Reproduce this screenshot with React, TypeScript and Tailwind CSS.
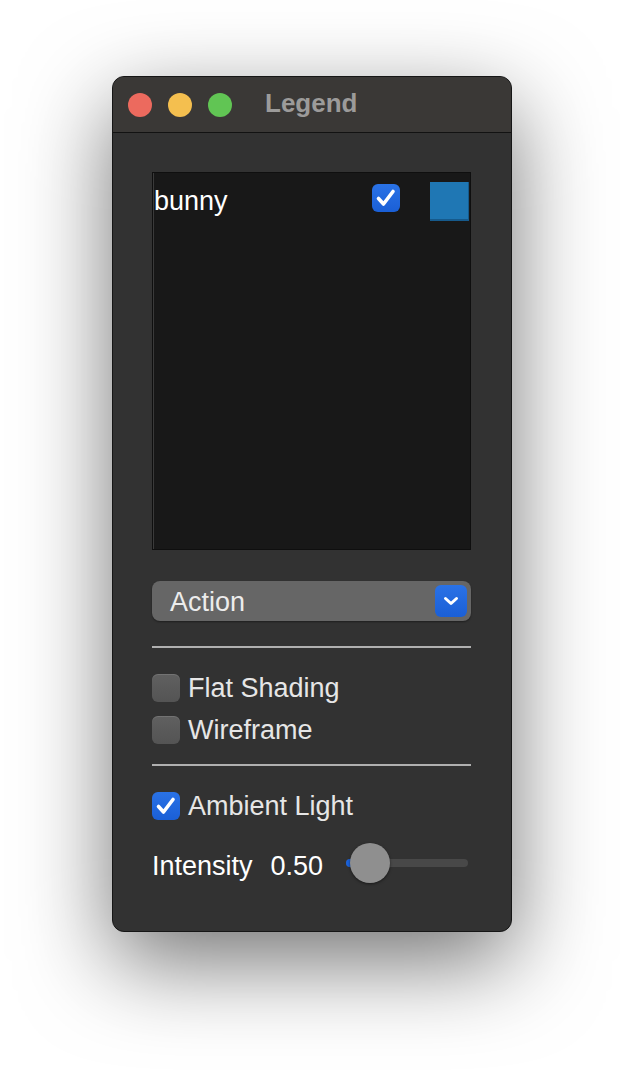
import React from "react";

function Check({ checked }: { checked?: boolean }) {
  if (checked) {
    return (
      <div className="w-[28px] h-[28px] rounded-[6px] bg-gradient-to-b from-[#2a72e6] to-[#1a5fd6] flex items-center justify-center shrink-0">
        <svg width="28" height="28" viewBox="0 0 28 28" fill="none">
          <path
            d="M6.5 14.5 L11.5 20 L21 7.5"
            stroke="white"
            strokeWidth="3.6"
            strokeLinecap="round"
            strokeLinejoin="round"
          />
        </svg>
      </div>
    );
  }
  return (
    <div className="w-[28px] h-[28px] rounded-[6px] bg-gradient-to-b from-[#606060] to-[#545454] shadow-[inset_0_1px_0_rgba(255,255,255,0.12)] shrink-0" />
  );
}

function App() {
  const font = "font-['Liberation_Sans',Arial,sans-serif]";
  const value = 0.5;

  return (
    <div className={"min-h-[1080px] bg-white flex justify-center pt-[76px] " + font}>
      <div className="w-[400px] h-[856px] rounded-[12px] border border-[#161616] bg-[#323232] overflow-hidden shadow-[0_30px_90px_rgba(0,0,0,0.55)] flex flex-col">
        {/* title bar */}
        <div className="h-[56px] bg-[#3a3836] border-b border-[#121212] flex items-center pl-[15px] shrink-0">
          <div className="w-[24px] h-[24px] rounded-full bg-[#ec6a5e]" />
          <div className="w-[24px] h-[24px] rounded-full bg-[#f4bf4f] ml-[16px]" />
          <div className="w-[24px] h-[24px] rounded-full bg-[#61c554] ml-[16px]" />
          <span className="ml-[33px] mb-[3px] text-[26px] font-bold text-[#9c9b9a] leading-none">Legend</span>
        </div>

        <div className="flex flex-col pl-[39px] pr-[40px] pt-[39px]">
          {/* legend list */}
          <div className="h-[378px] bg-[#181818] border border-[#0f0f0f] shadow-[inset_1px_0_0_#3a3a3a]">
            <div className="flex items-start pl-[1px] pr-[1px]">
              <span className="mt-[15px] text-[27px] text-white leading-none">bunny</span>
              <div className="ml-auto mt-[11px]">
                <Check checked />
              </div>
              <div className="ml-[30px] mt-[9px] w-[39px] h-[39px] bg-[#1f77b4] border-b-2 border-r border-[#165a8c]" />
            </div>
          </div>

          {/* dropdown */}
          <div className="mt-[31px] h-[40px] rounded-[8px] bg-[#666666] shadow-[0_1px_2px_rgba(0,0,0,0.4)] flex items-center pl-[18px] pr-[4px]">
            <span className="mt-[2px] text-[27px] text-[#ececec] leading-none">Action</span>
            <div className="ml-auto w-[32px] h-[32px] rounded-[6px] bg-gradient-to-b from-[#2a72e6] to-[#1a5fd6] flex items-center justify-center">
              <svg width="16" height="16" viewBox="0 0 16 16" fill="none">
                <path
                  d="M2.5 5.5 L8 10.5 L13.5 5.5"
                  stroke="white"
                  strokeWidth="3"
                  strokeLinecap="round"
                  strokeLinejoin="round"
                />
              </svg>
            </div>
          </div>

          <div className="mt-[25px] h-[2px] bg-[#b0b0b0]" />

          <div className="mt-[26px] flex items-center h-[28px]">
            <Check />
            <span className="ml-[8px] text-[27px] text-[#e6e6e6] leading-none">Flat Shading</span>
          </div>
          <div className="mt-[14px] flex items-center h-[28px]">
            <Check />
            <span className="ml-[8px] text-[27px] text-[#e6e6e6] leading-none">Wireframe</span>
          </div>

          <div className="mt-[20px] h-[2px] bg-[#b0b0b0]" />

          <div className="mt-[26px] flex items-center h-[28px]">
            <Check checked />
            <span className="ml-[8px] text-[27px] text-[#e6e6e6] leading-none">Ambient Light</span>
          </div>

          {/* intensity slider */}
          <div className="mt-[23px] flex items-center h-[40px]">
            <span className="pt-[6px] text-[27px] text-white leading-none">Intensity</span>
            <span className="pt-[6px] ml-[18px] text-[27px] text-white leading-none">{value.toFixed(2)}</span>
            <div className="ml-auto mr-[3px] relative w-[122px] h-[8px] rounded-full bg-[#484848]">
              <div className="absolute left-0 top-0 h-[8px] w-[14px] rounded-full bg-[#1a62dc]" />
              <div className="absolute left-[4px] top-[-16px] w-[40px] h-[40px] rounded-full bg-[#8f8f8f] shadow-[0_1px_3px_rgba(0,0,0,0.5)]" />
            </div>
          </div>
        </div>
      </div>
    </div>
  );
}

export default App;
